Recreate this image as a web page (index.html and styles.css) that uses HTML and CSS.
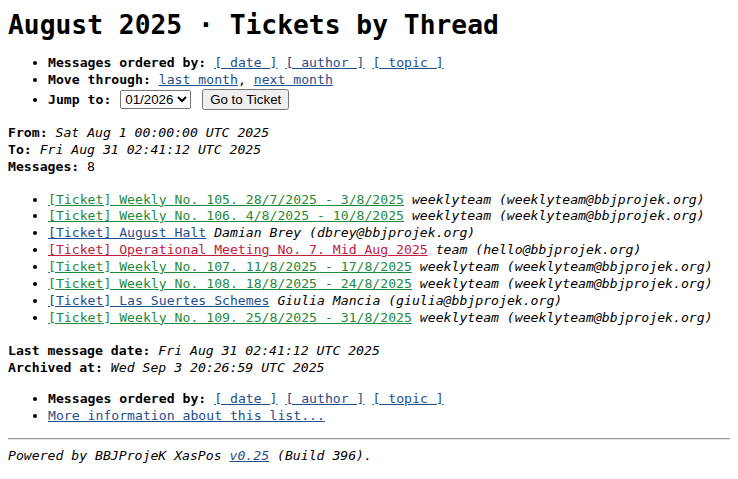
FILE: index.html
```html
<!DOCTYPE html>
<html>
<head>
<meta charset="utf-8">
<title>August 2025 · Tickets by Thread</title>
<link rel="stylesheet" href="styles.css">
</head>
<body>
<h1 class="title">August 2025 · Tickets by Thread</h1>
<ul class="nav">
  <li><b>Messages ordered by:</b> <a href="#">[ date ]</a> <a href="#">[ author ]</a> <a href="#">[ topic ]</a></li>
  <li><b>Move through:</b> <a href="#">last month</a>, <a href="#">next month</a></li>
  <li><b>Jump to:</b> <select class="jump"><option>01/2026</option></select> <button class="go">Go to Ticket</button></li>
</ul>
<p class="meta"><b>From:</b> <i>Sat Aug 1 00:00:00 UTC 2025</i><br>
<b>To:</b> <i>Fri Aug 31 02:41:12 UTC 2025</i><br>
<b>Messages:</b> 8</p>
<ul class="threads">
  <li><a class="green" href="#">[Ticket] Weekly No. 105. 28/7/2025 - 3/8/2025</a> <i>weeklyteam (weeklyteam@bbjprojek.org)</i></li>
  <li><a class="green" href="#">[Ticket] Weekly No. 106. 4/8/2025 - 10/8/2025</a> <i>weeklyteam (weeklyteam@bbjprojek.org)</i></li>
  <li><a href="#">[Ticket] August Halt</a> <i>Damian Brey (dbrey@bbjprojek.org)</i></li>
  <li><a class="red" href="#">[Ticket] Operational Meeting No. 7. Mid Aug 2025</a> <i>team (hello@bbjprojek.org)</i></li>
  <li><a class="green" href="#">[Ticket] Weekly No. 107. 11/8/2025 - 17/8/2025</a> <i>weeklyteam (weeklyteam@bbjprojek.org)</i></li>
  <li><a class="green" href="#">[Ticket] Weekly No. 108. 18/8/2025 - 24/8/2025</a> <i>weeklyteam (weeklyteam@bbjprojek.org)</i></li>
  <li><a href="#">[Ticket] Las Suertes Schemes</a> <i>Giulia Mancia (giulia@bbjprojek.org)</i></li>
  <li><a class="green" href="#">[Ticket] Weekly No. 109. 25/8/2025 - 31/8/2025</a> <i>weeklyteam (weeklyteam@bbjprojek.org)</i></li>
</ul>
<p class="meta meta-end"><b>Last message date:</b> <i>Fri Aug 31 02:41:12 UTC 2025</i><br>
<b>Archived at:</b> <i>Wed Sep 3 20:26:59 UTC 2025</i></p>
<ul class="nav nav-end">
  <li><b>Messages ordered by:</b> <a href="#">[ date ]</a> <a href="#">[ author ]</a> <a href="#">[ topic ]</a></li>
  <li><a href="#">More information about this list...</a></li>
</ul>
<hr class="rule">
<p class="footer"><i>Powered by BBJProjeK XasPos <a href="#">v0.25</a> (Build 396).</i></p>
</body>
</html>
```
FILE: styles.css
```css
body {
  margin: 8px;
  font-family: "DejaVu Sans Mono", monospace;
  font-size: 13.15px;
  line-height: 16.9px;
  color: #000;
  background: #fff;
}
.title {
  font-size: 26.3px;
  line-height: 30px;
  margin: 2px 0 15px;
  font-weight: bold;
}
a { color: #1f4e8c; }
a.green { color: #1e8a3c; }
a.red { color: #c0203c; }
ul { margin: 0; padding-left: 40px; }
.nav { margin: 0 0 15px; }
.nav-end { margin: 0; }
.threads { margin: 16px 0; }
.meta { margin: 0; }
.meta-end { margin-bottom: 14px; }
.jump, .go {
  font-family: Arial, "Liberation Sans", sans-serif;
  font-size: 13.33px;
}
.jump { margin-left: 1px; }
.go { margin-left: 3px; }
.rule {
  display: block;
  box-sizing: border-box;
  width: calc(100% + 8px);
  margin: 14px 0 8px;
  border: 0;
  border-top: 1px solid #999;
  border-bottom: 1px solid #e6e6e6;
}
.footer { margin: 0; }
```
